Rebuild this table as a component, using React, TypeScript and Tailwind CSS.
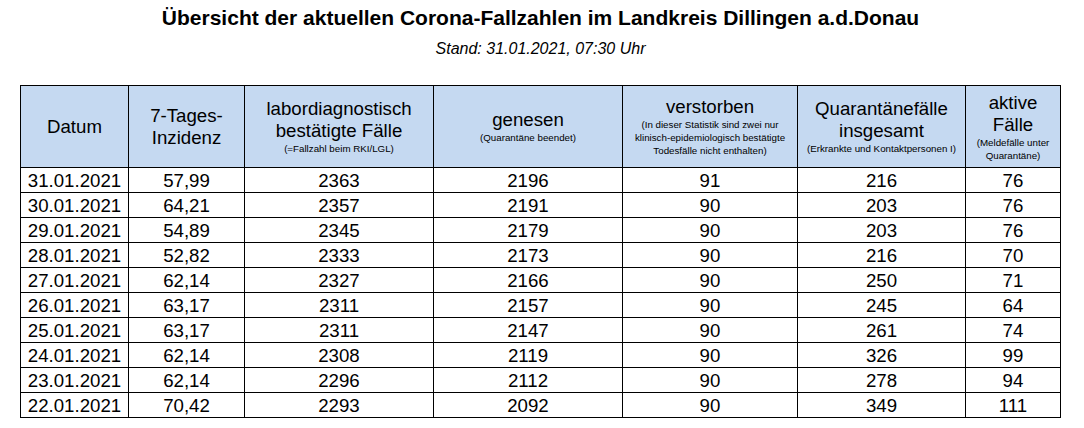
import React from 'react'

interface HeaderCell {
  lines: string[]
  notes: string[]
}

const headers: HeaderCell[] = [
  { lines: ['Datum'], notes: [] },
  { lines: ['7-Tages-', 'Inzidenz'], notes: [] },
  { lines: ['labordiagnostisch', 'bestätigte Fälle'], notes: ['(=Fallzahl beim RKI/LGL)'] },
  { lines: ['genesen'], notes: ['(Quarantäne beendet)'] },
  {
    lines: ['verstorben'],
    notes: [
      '(In dieser Statistik sind zwei nur',
      'klinisch-epidemiologisch bestätigte',
      'Todesfälle nicht enthalten)',
    ],
  },
  { lines: ['Quarantänefälle', 'insgesamt'], notes: ['(Erkrankte und Kontaktpersonen I)'] },
  { lines: ['aktive', 'Fälle'], notes: ['(Meldefälle unter', 'Quarantäne)'] },
]

const rows: string[][] = [
  ['31.01.2021', '57,99', '2363', '2196', '91', '216', '76'],
  ['30.01.2021', '64,21', '2357', '2191', '90', '203', '76'],
  ['29.01.2021', '54,89', '2345', '2179', '90', '203', '76'],
  ['28.01.2021', '52,82', '2333', '2173', '90', '216', '70'],
  ['27.01.2021', '62,14', '2327', '2166', '90', '250', '71'],
  ['26.01.2021', '63,17', '2311', '2157', '90', '245', '64'],
  ['25.01.2021', '63,17', '2311', '2147', '90', '261', '74'],
  ['24.01.2021', '62,14', '2308', '2119', '90', '326', '99'],
  ['23.01.2021', '62,14', '2296', '2112', '90', '278', '94'],
  ['22.01.2021', '70,42', '2293', '2092', '90', '349', '111'],
]

export default function App() {
  return (
    <div
      className="w-[1084px] h-[428px] bg-white text-black overflow-hidden"
      style={{ fontFamily: '"Liberation Sans", Arial, sans-serif' }}
    >
      <div className="ml-[20px] w-[1041px]">
        {/* Title */}
        <h1 className="pt-[6px] text-center text-[21px] leading-[24px] font-bold">
          Übersicht der aktuellen Corona-Fallzahlen im Landkreis Dillingen a.d.Donau
        </h1>
        <p className="mt-[10px] text-center text-[16px] leading-[18px] italic">
          Stand: 31.01.2021, 07:30 Uhr
        </p>

        {/* Table */}
        <div className="mt-[27px] grid grid-cols-[108px_116px_189px_189px_175px_168px_95px] border-r border-b border-black">
          {headers.map((h, i) => (
            <div
              key={i}
              className="h-[82px] border-l border-t border-black bg-[#c5d9f1] flex flex-col items-center justify-center text-center"
            >
              {h.lines.map((l) => (
                <span key={l} className="text-[18.67px] leading-[22px]">
                  {l}
                </span>
              ))}
              {h.notes.map((n) => (
                <span key={n} className="text-[9.75px] leading-[13px] whitespace-nowrap">
                  {n}
                </span>
              ))}
            </div>
          ))}

          {rows.map((r) =>
            r.map((v, j) => (
              <div
                key={r[0] + j}
                className="h-[25px] border-l border-t border-black flex items-center justify-center pt-[1px] text-[18.67px] leading-[24px]"
              >
                {v}
              </div>
            ))
          )}
        </div>
      </div>
    </div>
  )
}
